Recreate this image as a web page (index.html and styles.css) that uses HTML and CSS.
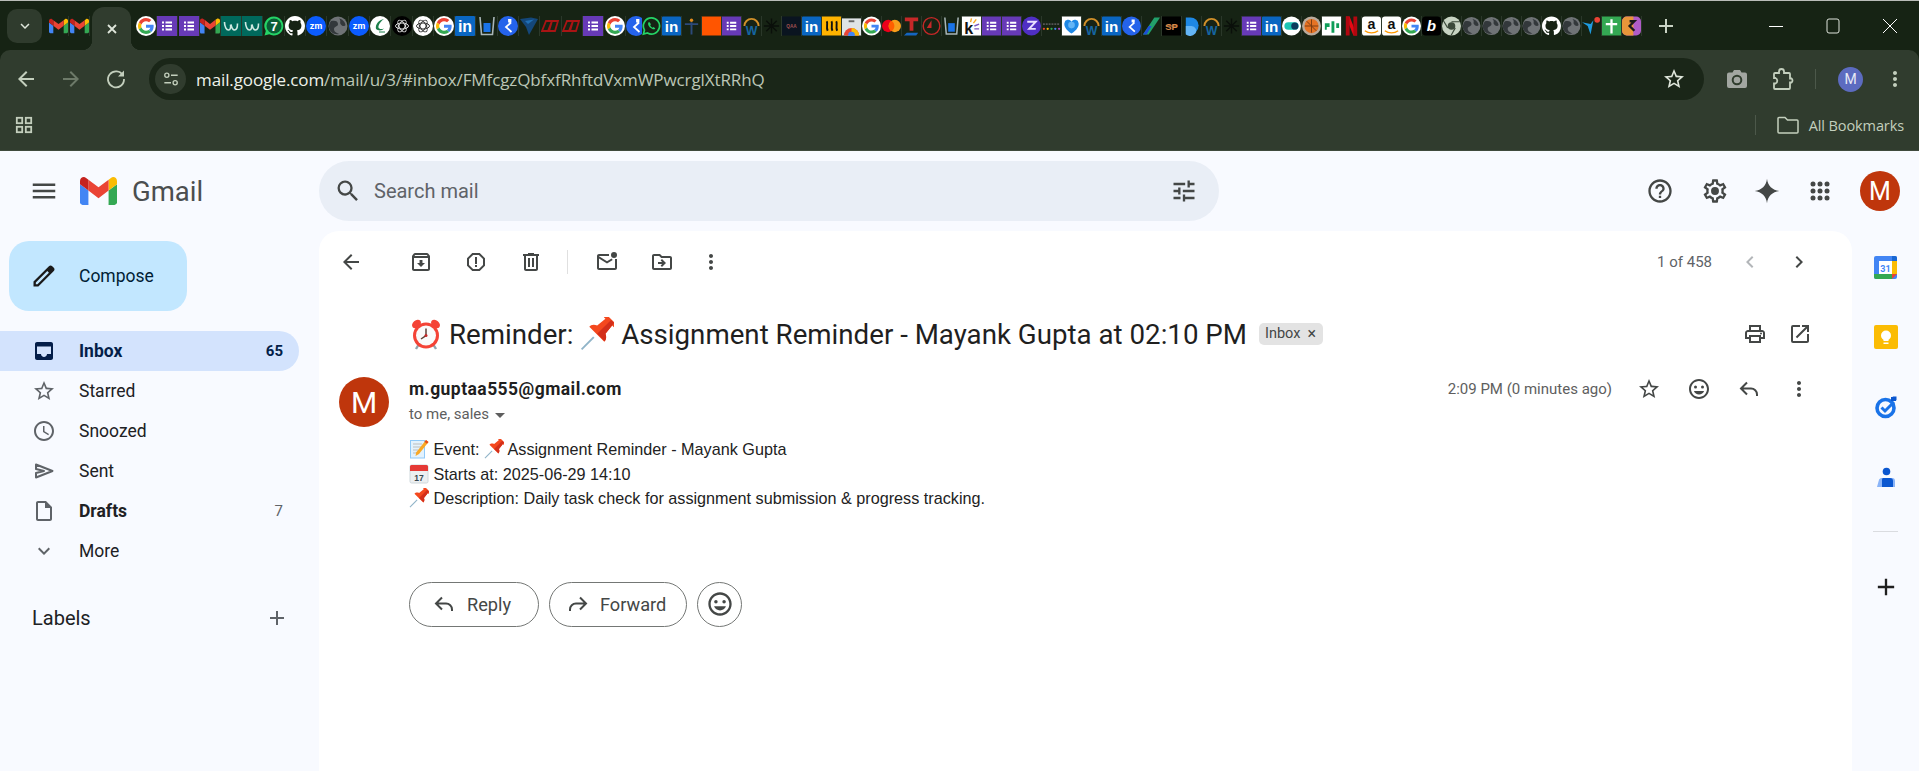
FILE: index.html
```html
<!DOCTYPE html>
<html lang="en">

<head>
  <title>Reminder - Gmail</title>
  <meta charset="utf-8" />
  <link rel="stylesheet" href="styles.css">
</head>

<body>
  <!-- icon sprites -->
  <svg class="sprites" xmlns="http://www.w3.org/2000/svg">
    <symbol id="i-menu" viewBox="0 0 24 24"><path d="M3 18h18v-2H3v2zm0-5h18v-2H3v2zm0-7v2h18V6H3z"/></symbol>
    <symbol id="i-search" viewBox="0 0 24 24"><path d="M15.5 14h-.79l-.28-.27A6.471 6.471 0 0 0 16 9.5 6.5 6.5 0 1 0 9.5 16c1.61 0 3.09-.59 4.23-1.57l.27.28v.79l5 4.99L20.49 19l-4.99-5zm-6 0C7.01 14 5 11.99 5 9.5S7.01 5 9.5 5 14 7.01 14 9.5 11.99 14 9.5 14z"/></symbol>
    <symbol id="i-tune" viewBox="0 0 24 24"><path d="M3 17v2h6v-2H3zM3 5v2h10V5H3zm10 16v-2h8v-2h-8v-2h-2v6h2zM7 9v2H3v2h4v2h2V9H7zm14 4v-2H11v2h10zm-6-4h2V7h4V5h-4V3h-2v6z"/></symbol>
    <symbol id="i-help" viewBox="0 0 24 24"><path d="M11 18h2v-2h-2v2zm1-16C6.48 2 2 6.48 2 12s4.48 10 10 10 10-4.48 10-10S17.52 2 12 2zm0 18c-4.41 0-8-3.59-8-8s3.59-8 8-8 8 3.59 8 8-3.59 8-8 8zm0-14c-2.21 0-4 1.79-4 4h2c0-1.1.9-2 2-2s2 .9 2 2c0 2-3 1.75-3 5h2c0-2.25 3-2.5 3-5 0-2.21-1.79-4-4-4z"/></symbol>
    <symbol id="i-gear" viewBox="0 0 24 24"><path d="M19.43 12.98c.04-.32.07-.64.07-.98 0-.34-.03-.66-.07-.98l2.11-1.65c.19-.15.24-.42.12-.64l-2-3.46c-.09-.16-.26-.25-.44-.25-.06 0-.12.01-.17.03l-2.49 1c-.52-.4-1.08-.73-1.69-.98l-.38-2.65C14.46 2.18 14.25 2 14 2h-4c-.25 0-.46.18-.49.42l-.38 2.65c-.61.25-1.17.59-1.69.98l-2.49-1c-.06-.02-.12-.03-.18-.03-.17 0-.34.09-.43.25l-2 3.46c-.13.22-.07.49.12.64l2.11 1.65c-.04.32-.07.65-.07.98 0 .33.03.66.07.98l-2.11 1.65c-.19.15-.24.42-.12.64l2 3.46c.09.16.26.25.44.25.06 0 .12-.01.17-.03l2.49-1c.52.4 1.08.73 1.69.98l.38 2.65c.03.24.24.42.49.42h4c.25 0 .46-.18.49-.42l.38-2.65c.61-.25 1.17-.59 1.69-.98l2.49 1c.06.02.12.03.18.03.17 0 .34-.09.43-.25l2-3.46c.12-.22.07-.49-.12-.64l-2.11-1.65zm-1.98-1.71c.04.31.05.52.05.73 0 .21-.02.43-.05.73l-.14 1.13.89.7 1.08.84-.7 1.21-1.27-.51-1.04-.42-.9.68c-.43.32-.84.56-1.25.73l-1.06.43-.16 1.13-.2 1.35h-1.4l-.19-1.35-.16-1.13-1.06-.43c-.43-.18-.83-.41-1.23-.71l-.91-.7-1.06.43-1.27.51-.7-1.21 1.08-.84.89-.7-.14-1.13c-.03-.31-.05-.54-.05-.74s.02-.43.05-.73l.14-1.13-.89-.7-1.08-.84.7-1.21 1.27.51 1.04.42.9-.68c.43-.32.84-.56 1.25-.73l1.06-.43.16-1.13.2-1.35h1.39l.19 1.35.16 1.13 1.06.43c.43.18.83.41 1.23.71l.91.7 1.06-.43 1.27-.51.7 1.21-1.07.85-.89.7.14 1.13z"/><circle cx="12" cy="12" r="3.4"/></symbol>
    <symbol id="i-gem" viewBox="0 0 24 24"><path d="M12 1.5c.6 5.8 4.7 9.9 10.5 10.5-5.8.6-9.9 4.7-10.5 10.5C11.4 16.7 7.3 12.6 1.5 12 7.300 11.400 11.400 7.300 12 1.500z"/></symbol>
    <symbol id="i-apps" viewBox="0 0 24 24"><circle cx="5" cy="5" r="2.500"/><circle cx="12" cy="5" r="2.500"/><circle cx="19" cy="5" r="2.500"/><circle cx="5" cy="12" r="2.500"/><circle cx="12" cy="12" r="2.500"/><circle cx="19" cy="12" r="2.500"/><circle cx="5" cy="19" r="2.500"/><circle cx="12" cy="19" r="2.500"/><circle cx="19" cy="19" r="2.500"/></symbol>
    <symbol id="i-pencil" viewBox="0 0 24 24"><path d="M20.41 4.94l-1.35-1.35c-.78-.78-2.05-.78-2.83 0L3 16.82V21h4.18L20.41 7.770c.79-.78.79-2.050 0-2.830zm-14 14.120L5 19v-1.360l9.820-9.820 1.410 1.410-9.820 9.830z"/></symbol>
    <symbol id="i-inbox" viewBox="0 0 24 24"><path d="M19 3H5c-1.100 0-2 .9-2 2v14c0 1.100.9 2 2 2h14c1.100 0 2-.9 2-2V5c0-1.100-.9-2-2-2zm0 12h-4c0 1.660-1.350 3-3 3s-3-1.340-3-3H5V5h14v10z"/><path d="M5 5h14v2.500H5z"/></symbol>
    <symbol id="i-star" viewBox="0 0 24 24"><path d="M22 9.240l-7.190-.62L12 2 9.190 8.630 2 9.240l5.460 4.730L5.820 21 12 17.270 18.180 21l-1.630-7.030L22 9.240zM12 15.400l-3.760 2.270 1-4.280-3.320-2.880 4.380-.38L12 6.100l1.710 4.040 4.380.38-3.320 2.880 1 4.280L12 15.400z"/></symbol>
    <symbol id="i-clock" viewBox="0 0 24 24"><path d="M11.990 2C6.470 2 2 6.480 2 12s4.470 10 9.990 10C17.520 22 22 17.520 22 12S17.520 2 11.990 2zM12 20c-4.420 0-8-3.580-8-8s3.580-8 8-8 8 3.580 8 8-3.580 8-8 8zm.5-13H11v6l5.250 3.150.75-1.230-4.500-2.670z"/></symbol>
    <symbol id="i-send" viewBox="0 0 24 24"><path d="M4 5.500 20.500 12 4 18.500V14l8-2-8-2z" fill="none" stroke="currentColor" stroke-width="2" stroke-linejoin="round"/></symbol>
    <symbol id="i-draft" viewBox="0 0 24 24"><path d="M14 2H6c-1.100 0-1.990.9-1.990 2L4 20c0 1.100.89 2 1.990 2H18c1.100 0 2-.9 2-2V8l-6-6zm4 18H6V4h7v5h5v11z"/></symbol>
    <symbol id="i-down" viewBox="0 0 24 24"><path d="M16.590 8.590L12 13.170 7.410 8.590 6 10l6 6 6-6z"/></symbol>
    <symbol id="i-add" viewBox="0 0 24 24"><path d="M19 13h-6v6h-2v-6H5v-2h6V5h2v6h6v2z"/></symbol>
    <symbol id="i-back" viewBox="0 0 24 24"><path d="M20 11H7.830l5.590-5.590L12 4l-8 8 8 8 1.410-1.410L7.830 13H20v-2z"/></symbol>
    <symbol id="i-archive" viewBox="0 0 24 24"><path d="M20.540 5.230l-1.390-1.680C18.880 3.210 18.470 3 18 3H6c-.47 0-.88.21-1.160.55L3.460 5.230C3.170 5.570 3 6.020 3 6.500V19c0 1.100.9 2 2 2h14c1.100 0 2-.9 2-2V6.500c0-.48-.17-.93-.46-1.270zM6.240 5h11.520l.81.97H5.440l.8-.97zM5 19V8h14v11H5zm8.450-9h-2.900v3H8l4 4 4-4h-2.550z"/></symbol>
    <symbol id="i-report" viewBox="0 0 24 24"><path d="M15.730 3H8.270L3 8.270v7.460L8.270 21h7.460L21 15.730V8.270L15.730 3zM19 14.900L14.900 19H9.100L5 14.900V9.100L9.100 5h5.800L19 9.100v5.800zM11 7h2v7h-2zM11 15h2v2h-2z"/></symbol>
    <symbol id="i-trash" viewBox="0 0 24 24"><path d="M15 4V3H9v1H4v2h1v13c0 1.100.9 2 2 2h10c1.100 0 2-.9 2-2V6h1V4h-5zm2 15H7V6h10v13zM9 8h2v9H9zm4 0h2v9h-2z"/></symbol>
    <symbol id="i-unread" viewBox="0 0 24 24"><path d="M22 9v9c0 1.100-.9 2-2 2H4c-1.100 0-2-.9-2-2V6c0-1.100.9-2 2-2h10v2H4v12h16V9h2zM4 6.300l8 5 4.600-2.900 1.100 1.700L12 13.600 4 8.600z"/><circle cx="19" cy="5" r="3"/></symbol>
    <symbol id="i-move" viewBox="0 0 24 24"><path d="M20 6h-8l-2-2H4c-1.100 0-1.990.9-1.990 2L2 18c0 1.100.9 2 2 2h16c1.100 0 2-.9 2-2V8c0-1.100-.9-2-2-2zm0 12H4V6h5.170l2 2H20v10zm-8.010-9l-1.410 1.410L12.160 12H8v2h4.160l-1.590 1.590L11.990 17 16 13.010 11.990 9z"/></symbol>
    <symbol id="i-more" viewBox="0 0 24 24"><path d="M12 8c1.100 0 2-.9 2-2s-.9-2-2-2-2 .9-2 2 .9 2 2 2zm0 2c-1.100 0-2 .9-2 2s.9 2 2 2 2-.9 2-2-.9-2-2-2zm0 6c-1.100 0-2 .9-2 2s.9 2 2 2 2-.9 2-2-.9-2-2-2z"/></symbol>
    <symbol id="i-prev" viewBox="0 0 24 24"><path d="M15.410 7.410L14 6l-6 6 6 6 1.410-1.410L10.830 12z"/></symbol>
    <symbol id="i-next" viewBox="0 0 24 24"><path d="M10 6L8.590 7.410 13.170 12l-4.580 4.590L10 18l6-6z"/></symbol>
    <symbol id="i-print" viewBox="0 0 24 24"><path d="M19 8h-1V3H6v5H5c-1.660 0-3 1.340-3 3v6h4v4h12v-4h4v-6c0-1.660-1.340-3-3-3zM8 5h8v3H8V5zm8 12v2H8v-4h8v2zm2-2v-2H6v2H4v-4c0-.55.45-1 1-1h14c.55 0 1 .45 1 1v4h-2z"/><circle cx="18" cy="11.500" r="1"/></symbol>
    <symbol id="i-open" viewBox="0 0 24 24"><path d="M19 19H5V5h7V3H5a2 2 0 0 0-2 2v14a2 2 0 0 0 2 2h14c1.100 0 2-.9 2-2v-7h-2v7zM14 3v2h3.590l-9.830 9.830 1.410 1.410L19 6.410V10h2V3h-7z"/></symbol>
    <symbol id="i-smile" viewBox="0 0 24 24"><path d="M12 2C6.480 2 2 6.480 2 12s4.480 10 10 10 10-4.480 10-10S17.520 2 12 2zm0 18c-4.410 0-8-3.590-8-8s3.590-8 8-8 8 3.590 8 8-3.590 8-8 8z"/><circle cx="8.500" cy="10" r="1.500"/><circle cx="15.500" cy="10" r="1.500"/><path d="M12 17.500c2.330 0 4.310-1.460 5.110-3.500H6.890c.8 2.040 2.780 3.500 5.110 3.500z"/></symbol>
    <symbol id="i-reply" viewBox="0 0 24 24"><path d="M10 5.500 4 11.500l6 6M4 11.500h10a6 6 0 0 1 6 6v1.500" fill="none" stroke="currentColor" stroke-width="2"/></symbol>
    <symbol id="i-forward" viewBox="0 0 24 24"><path d="M14 5.500l6 6-6 6M20 11.500H10a6 6 0 0 0-6 6v1.500" fill="none" stroke="currentColor" stroke-width="2"/></symbol>

    <!-- browser toolbar -->
    <symbol id="b-reload" viewBox="0 0 24 24"><path d="M19 8.500A8 8 0 1 0 20 12" fill="none" stroke="currentColor" stroke-width="1.800"/><path d="M20 3.500v6h-6z"/></symbol>
    <symbol id="b-chip" viewBox="0 0 24 24"><g fill="none" stroke="currentColor" stroke-width="1.600"><circle cx="7" cy="7.500" r="2.500"/><path d="M12 7.500h8M4 16.500h8"/><circle cx="17" cy="16.500" r="2.500"/></g></symbol>
    <symbol id="b-camera" viewBox="0 0 24 24"><path d="M9 3h6l1.500 2.500H20a2 2 0 0 1 2 2V19a2 2 0 0 1-2 2H4a2 2 0 0 1-2-2V7.500a2 2 0 0 1 2-2h3.500z" fill="#a2a6a1"/><circle cx="12" cy="13" r="4.300" fill="none" stroke="#2f3c2d" stroke-width="2"/></symbol>
    <symbol id="b-ext" viewBox="0 0 24 24"><path d="M9 4.500a2.500 2.500 0 0 1 5 0V6h5a1 1 0 0 1 1 1v4.500h1.500a2.500 2.500 0 0 1 0 4H20V21a1 1 0 0 1-1 1H5a1 1 0 0 1-1-1v-4.500h1.500a3 3 0 0 0 0-5.500H4V7a1 1 0 0 1 1-1h4z" fill="none" stroke="currentColor" stroke-width="1.800"/></symbol>
    <symbol id="b-grid" viewBox="0 0 20 20"><g fill="none" stroke="currentColor" stroke-width="2"><rect x="2" y="2" width="6" height="6"/><rect x="12" y="2" width="6" height="6"/><rect x="2" y="12" width="6" height="6"/><rect x="12" y="12" width="6" height="6"/></g></symbol>
    <symbol id="b-folder" viewBox="0 0 24 24"><path d="M2 5.500a1 1 0 0 1 1-1h6l2.500 2.500H21a1 1 0 0 1 1 1v11a1 1 0 0 1-1 1H3a1 1 0 0 1-1-1z" fill="none" stroke="currentColor" stroke-width="1.500"/></symbol>

    <!-- gmail + side panel logos -->
    <symbol id="l-gmail" viewBox="52 42 88 66"><path fill="#4285f4" d="M58 108h14V74L52 59v43c0 3.320 2.690 6 6 6"/><path fill="#34a853" d="M120 108h14c3.320 0 6-2.690 6-6V59l-20 15"/><path fill="#fbbc04" d="M120 48v26l20-15v-8c0-7.420-8.470-11.650-14.400-7.200"/><path fill="#ea4335" d="M72 74V48l24 18 24-18v26L96 92"/><path fill="#c5221f" d="M52 51v8l20 15V48l-5.600-4.200c-5.940-4.450-14.400-.22-14.400 7.200"/></symbol>
    <symbol id="l-cal" viewBox="0 0 23 23"><rect width="23" height="23" rx="2" fill="#4285f4"/><rect x="5" y="5" width="13" height="13" fill="#fff"/><path d="M18 5h5v13h-5z" fill="#fbbc04"/><path d="M0 18h18v5H2a2 2 0 0 1-2-2z" fill="#34a853"/><path d="M18 0h3a2 2 0 0 1 2 2v3h-5z" fill="#1967d2"/><path d="M18 18h5l-5 5z" fill="#ea4335"/><text x="11.500" y="15.500" text-anchor="middle" class="cal-num">31</text></symbol>
    <symbol id="l-keep" viewBox="0 0 24 24"><rect width="24" height="24" rx="2" fill="#fbbc04"/><circle cx="12" cy="10.500" r="5" fill="#fff"/><path d="M9.500 14h5v2h-5zM9.500 17.500h5V19h-5z" fill="#fff"/></symbol>
    <symbol id="l-tasks" viewBox="0 0 24 24"><circle cx="11.500" cy="13" r="8.500" fill="none" stroke="#1a73e8" stroke-width="3.600"/><path d="M7.500 12.500l3.500 3.500 9-9" fill="none" stroke="#1a73e8" stroke-width="3"/><path d="M18.500 1.500h4v4z" fill="#0b57d0"/><rect x="17" y="2" width="5" height="4" fill="#0b57d0"/></symbol>
    <symbol id="l-contacts" viewBox="0 0 24 24"><circle cx="12.500" cy="6.500" r="3.800" fill="#0b57d0"/><path d="M7 13h11a3 3 0 0 1 3 3v6H3l1.500-5.500A4 4 0 0 1 7 13z" fill="#8ab4f8"/><path d="M9 13h7a3 3 0 0 1 3 3v6H8v-7a2 2 0 0 1 1-2z" fill="#0b57d0"/></symbol>

    <!-- emoji -->
    <symbol id="e-alarm" viewBox="0 0 32 32"><ellipse cx="6.500" cy="6" rx="5" ry="3.600" fill="#f44336" transform="rotate(-40 6.500 6)"/><ellipse cx="25.500" cy="6" rx="5" ry="3.600" fill="#f44336" transform="rotate(40 25.500 6)"/><path d="M6 31l3-5M26 31l-3-5" stroke="#90a4ae" stroke-width="2.400"/><circle cx="16" cy="17.500" r="13" fill="#f44336"/><circle cx="16" cy="17.500" r="10" fill="#fafafa"/><path d="M16 10.500v7l-5 3.500" fill="none" stroke="#5d4037" stroke-width="1.500"/><circle cx="16" cy="17.500" r="1.500" fill="#c62828"/></symbol>
    <symbol id="e-pin" viewBox="0 0 32 32"><path d="M1.500 30.500 13 19" stroke="#90b4c8" stroke-width="1.800"/><g transform="rotate(45 19 13)"><path d="M13 -2h12a1.500 1.500 0 0 1 0 3.500h-1.500l1 10c3.500 1.500 4.500 4 4.500 6H9c0-2 1-4.500 4.500-6l1-10H13a1.500 1.500 0 0 1 0-3.500z" fill="#f4481e"/><path d="M19 -1.500h4l1.500 13c2.500 1 4 3 4.500 5.500H19z" fill="#d32f1a"/></g></symbol>
    <symbol id="e-memo" viewBox="0 0 20 20"><rect x="1.500" y="1.500" width="14" height="17.500" fill="#e3f2fd" stroke="#90caf9"/><path d="M4 5h9M4 8h8M4 11h5M4 14h4" stroke="#bdbdbd"/><path d="M17 1l2.500 2L10 15l-3.500 2 .8-3.800z" fill="#f9a825"/><path d="M17 1l2.500 2-1.500 1.800-2.500-2z" fill="#e64a19"/></symbol>
    <symbol id="e-cal" viewBox="0 0 20 20"><rect x="1" y="1" width="18" height="18" rx="1.500" fill="#eceff1" stroke="#cfd8dc"/><path d="M1 2.500A1.500 1.500 0 0 1 2.500 1h15A1.500 1.500 0 0 1 19 2.500V7H1z" fill="#e53935"/><text x="10" y="17" text-anchor="middle" class="cal-17">17</text></symbol>

    <!-- tab favicons -->
    <symbol id="f-g" viewBox="-6 -6 60 60"><circle cx="24" cy="24" r="30" fill="#fff"/><path fill="#EA4335" d="M24 9.500c3.540 0 6.710 1.220 9.210 3.600l6.850-6.850C35.900 2.380 30.470 0 24 0 14.620 0 6.510 5.380 2.560 13.220l7.980 6.190C12.430 13.720 17.740 9.500 24 9.500z"/><path fill="#4285F4" d="M46.980 24.550c0-1.570-.15-3.090-.38-4.550H24v9.020h12.940c-.58 2.960-2.260 5.480-4.780 7.180l7.730 6c4.510-4.180 7.090-10.360 7.090-17.650z"/><path fill="#FBBC05" d="M10.530 28.590c-.48-1.450-.76-2.990-.76-4.590s.27-3.140.76-4.590l-7.980-6.190C.92 16.460 0 20.120 0 24c0 3.880.92 7.540 2.560 10.780l7.970-6.190z"/><path fill="#34A853" d="M24 48c6.480 0 11.930-2.130 15.890-5.810l-7.730-6c-2.150 1.450-4.920 2.300-8.160 2.300-6.260 0-11.570-4.220-13.470-9.910l-7.980 6.190C6.510 42.620 14.620 48 24 48z"/></symbol>
    <symbol id="f-forms" viewBox="0 0 20 20"><rect width="20" height="20" fill="#673ab7"/><path d="M5 5.500h2v2H5zM5 9h2v2H5zM5 12.500h2v2H5zM8.500 5.500H15v2H8.500zM8.500 9H15v2H8.500zM8.500 12.500H15v2H8.500z" fill="#fff"/></symbol>
    <symbol id="f-wave" viewBox="0 0 20 20"><rect width="20" height="20" fill="#00695c"/><path d="M3.500 6c0 5 2 8 4 8s2.500-3 2-5.500M10 8.500c.6 3 2 5.500 3.500 5.500 2.500 0 3-3 3-6.500" fill="none" stroke="#cfe9e2" stroke-width="1.600"/></symbol>
    <symbol id="f-wa7" viewBox="0 0 20 20"><path d="M10 .5A9.500 9.500 0 0 0 1.800 15L.5 19.500l4.700-1.200A9.500 9.500 0 1 0 10 .5z" fill="#25d366"/><circle cx="10" cy="10" r="7.500" fill="#0b5d35"/><text x="10" y="14.500" text-anchor="middle" class="ft-7">7</text></symbol>
    <symbol id="f-gh" viewBox="0 0 16 16"><path fill="#fff" d="M8 0C3.580 0 0 3.580 0 8c0 3.540 2.290 6.530 5.470 7.590.4.070.55-.17.55-.38 0-.19-.01-.82-.01-1.490-2.010.37-2.530-.49-2.690-.94-.09-.23-.48-.94-.82-1.130-.28-.15-.68-.52-.01-.53.63-.01 1.080.58 1.230.82.72 1.210 1.870.87 2.330.66.070-.52.28-.87.51-1.070-1.780-.2-3.640-.89-3.640-3.950 0-.87.31-1.590.82-2.150-.08-.2-.36-1.020.08-2.120 0 0 .67-.21 2.200.82.64-.18 1.320-.27 2-.27.68 0 1.360.09 2 .27 1.530-1.040 2.200-.82 2.200-.82.44 1.100.16 1.920.08 2.120.51.56.82 1.270.82 2.150 0 3.070-1.870 3.750-3.650 3.950.29.25.54.73.54 1.480 0 1.070-.01 1.930-.01 2.200 0 .21.15.46.55.38A8.013 8.013 0 0016 8c0-4.420-3.580-8-8-8z"/></symbol>
    <symbol id="f-zm" viewBox="0 0 20 20"><circle cx="10" cy="10" r="10" fill="#0b5cff"/><text x="10" y="13" text-anchor="middle" class="ft-zm">zm</text></symbol>
    <symbol id="f-globe" viewBox="0 0 20 20"><circle cx="10" cy="10" r="9.500" fill="#6f7376"/><path d="M3 5c4-1 7 0 7 3s-4 2-4 5 3 4 5 5c-5 1-9-2-10-6-.4-2.500.6-5 2-7zM11 2.500c3 .5 6 3 6.500 6.500-1 2-4 1-5-1s1-3-1.500-5.500z" fill="#33383b"/></symbol>
    <symbol id="f-leaf" viewBox="0 0 20 20"><circle cx="10" cy="10" r="10" fill="#fff"/><path d="M14 3C9 4 5 8 6 13c2 2 6 2 8-.5-3 1-5 .5-5.500-1C8 9 11 5 14 3z" fill="#1b7f4b"/><path d="M9 16h6" stroke="#1b7f4b"/></symbol>
    <symbol id="f-gpt" viewBox="0 0 20 20"><circle cx="10" cy="10" r="10" fill="#000"/><g fill="none" stroke="#ddd" stroke-width="1"><ellipse cx="10" cy="10" rx="6.500" ry="3"/><ellipse cx="10" cy="10" rx="6.500" ry="3" transform="rotate(60 10 10)"/><ellipse cx="10" cy="10" rx="6.500" ry="3" transform="rotate(120 10 10)"/></g></symbol>
    <symbol id="f-gptw" viewBox="0 0 20 20"><circle cx="10" cy="10" r="10" fill="#fff"/><g fill="none" stroke="#333" stroke-width="1"><ellipse cx="10" cy="10" rx="6.500" ry="3"/><ellipse cx="10" cy="10" rx="6.500" ry="3" transform="rotate(60 10 10)"/><ellipse cx="10" cy="10" rx="6.500" ry="3" transform="rotate(120 10 10)"/></g></symbol>
    <symbol id="f-in" viewBox="0 0 20 20"><rect width="20" height="20" rx="1" fill="#0a66c2"/><text x="10" y="16" text-anchor="middle" class="ft-in">in</text></symbol>
    <symbol id="f-cup" viewBox="0 0 20 20"><path d="M3 1l1.500 17.500h11L17 1" fill="none" stroke="#a9b6b8" stroke-width="1.600"/><rect x="6.500" y="7" width="7" height="9" fill="#1a73e8"/></symbol>
    <symbol id="f-kb" viewBox="0 0 20 20"><circle cx="10" cy="10" r="10" fill="#2563eb"/><path d="M11 4h1.500v1.500H11zM13 6.500 8 11l5.500 5" fill="none" stroke="#fff" stroke-width="1.800"/></symbol>
    <symbol id="f-swoosh" viewBox="0 0 20 20"><path d="M1 3l11-1.500 7 1.500-9 16-3-8z" fill="#14477a"/><path d="M6 5l9-1.500L9 8z" fill="#1f6fb5"/></symbol>
    <symbol id="f-red" viewBox="0 0 20 20"><path d="M1 15 5 5h6l-3 10zM7 15 11 5h6l-3 10z" fill="none" stroke="#a81414" stroke-width="1.800"/></symbol>
    <symbol id="f-fig" viewBox="0 0 20 20"><circle cx="10" cy="4" r="1.800" fill="#e08a1e"/><path d="M3 8h14M10 6v13" stroke="#2c4a7a" stroke-width="2"/></symbol>
    <symbol id="f-wa" viewBox="0 0 20 20"><path d="M10 1.500A8.500 8.500 0 0 0 2.600 14.300L1.500 18.500l4.300-1.100A8.500 8.500 0 1 0 10 1.500z" fill="none" stroke="#25d366" stroke-width="1.800"/><path d="M7 6c-1.500 1.500 0 4.500 1.800 5.800s4 2.500 5.200.7l-1.800-1.500-1.100.8c-1-.5-2-1.500-2.500-2.600l.8-1L8 6z" fill="#25d366"/></symbol>
    <symbol id="f-orange" viewBox="0 0 20 20"><rect width="20" height="20" fill="#ff5500"/></symbol>
    <symbol id="f-w" viewBox="0 0 20 20"><path d="M2.500 10a7.500 7.500 0 0 1 15 0" fill="none" stroke="#d2902a" stroke-width="2"/><text x="10" y="19.500" text-anchor="middle" class="ft-w">W</text></symbol>
    <symbol id="f-star" viewBox="0 0 20 20"><path d="M10 2v16M2 10h16M4.500 4.500l11 11M15.500 4.500l-11 11" stroke="#0a0f0a" stroke-width="1.500"/></symbol>
    <symbol id="f-qaa" viewBox="0 0 20 20"><rect width="20" height="20" fill="#0a1420"/><text x="10" y="12" text-anchor="middle" class="ft-q">QAA</text></symbol>
    <symbol id="f-rrr" viewBox="0 0 20 20"><rect width="20" height="20" fill="#ffb300"/><path d="M5 5c1.500 3-1 6 1 10M10 5c1.500 3-1 6 1 10M15 5c1.500 3-1 6 1 10" fill="none" stroke="#111" stroke-width="2"/></symbol>
    <symbol id="f-store" viewBox="0 0 20 20"><rect y="2" width="20" height="18" fill="#dfe3e6"/><rect x="7" y="4" width="6" height="2" fill="#666"/><path d="M2 20a8 8 0 0 1 16 0z" fill="#ea4335"/><path d="M10 12a8 8 0 0 1 8 8h-5a3 3 0 0 0-3-3z" fill="#fbbc04"/><circle cx="10" cy="19.500" r="3.500" fill="#4285f4"/></symbol>
    <symbol id="f-mc" viewBox="0 0 20 20"><circle cx="6.500" cy="10" r="6.500" fill="#eb001b"/><circle cx="13.500" cy="10" r="6.500" fill="#f79e1b"/><path d="M10 4.500a6.500 6.500 0 0 1 0 11 6.500 6.500 0 0 1 0-11z" fill="#ff5f00"/></symbol>
    <symbol id="f-t" viewBox="0 0 20 20"><path d="M3 1h14v4h-5v10H8V5H3z" fill="#c62828"/><path d="M2 20l3-3h12l-2 3z" fill="#1565c0"/></symbol>
    <symbol id="f-timer" viewBox="0 0 20 20"><circle cx="10" cy="10" r="8.800" fill="none" stroke="#c62828" stroke-width="1.500"/><path d="M10 4v8H5z" fill="#c62828"/></symbol>
    <symbol id="f-kw" viewBox="0 0 20 20"><rect width="20" height="20" fill="#fff"/><text x="7" y="18" text-anchor="middle" class="ft-k">k</text><path d="M9 6l1-4M12 7l3-4" stroke="#f9a825" stroke-width="1.500"/><path d="M13 10l5-2M13 13l5 0" stroke="#7e57c2" stroke-width="1.500"/></symbol>
    <symbol id="f-z" viewBox="0 0 20 20"><circle cx="10" cy="10" r="10" fill="#4f2fc4"/><path d="M5.500 5.500h9L7.500 13H14.500" fill="none" stroke="#e8e0ff" stroke-width="2"/></symbol>
    <symbol id="f-dots" viewBox="0 0 20 20"><path d="M1 8h18" stroke="#555" stroke-width="2" stroke-dasharray="2 1"/><circle cx="2" cy="13" r="1.200" fill="#ea4335"/><circle cx="6" cy="13" r="1.200" fill="#fbbc04"/><circle cx="10" cy="13" r="1.200" fill="#34a853"/><circle cx="14" cy="13" r="1.200" fill="#4285f4"/><circle cx="18" cy="13" r="1.200" fill="#ab47bc"/></symbol>
    <symbol id="f-heart" viewBox="0 0 20 20"><rect width="20" height="20" fill="#fff"/><path d="M10 18C4 14 2 10 2.500 7A4 4 0 0 1 10 5.500 4 4 0 0 1 17.500 7c.5 3-1.500 7-7.500 11z" fill="#1e88e5"/><circle cx="10" cy="9" r="3.500" fill="#64b5f6"/></symbol>
    <symbol id="f-slash" viewBox="0 0 20 20"><path d="M13 1h6L7 19H1z" fill="#22a06b"/><path d="M7 10l3 0-5 9H1z" fill="#1d4ed8"/></symbol>
    <symbol id="f-sp" viewBox="0 0 20 20"><rect width="20" height="20" fill="#000"/><text x="10" y="14" text-anchor="middle" class="ft-sp">SP</text><path d="M4 10h12" stroke="#d88a4a"/></symbol>
    <symbol id="f-p" viewBox="0 0 20 20"><path d="M4 1h5a8.500 8.500 0 0 1 0 17H4z" fill="#1e88e5"/><path d="M4 10h6a5 5 0 0 1 4 8 8 8 0 0 1-10 1z" fill="#64b5f6"/></symbol>
    <symbol id="f-toggle" viewBox="0 0 20 20"><circle cx="10" cy="10" r="10" fill="#fff"/><rect x="2.500" y="6" width="15" height="8" rx="4" fill="#1cc5b5"/><circle cx="13.500" cy="10" r="3.800" fill="#0b3c5d"/></symbol>
    <symbol id="f-lpu" viewBox="0 0 20 20"><circle cx="10" cy="10" r="10" fill="#b9aa9c"/><circle cx="10" cy="10" r="7.500" fill="#e67324"/><path d="M3 10h14M10 3v14M5 5l10 10" stroke="#7a3b12"/></symbol>
    <symbol id="f-gi" viewBox="0 0 20 20"><rect width="20" height="20" fill="#fff"/><path d="M3 7h5v4H5v3l-2 0zM10 5h3v12h-3zM15 7h3v5h-3z" fill="#0f9d58"/></symbol>
    <symbol id="f-n" viewBox="0 0 20 20"><path d="M4 0h4l8 20h-4z" fill="#e50914"/><path d="M4 0h4v20H4zM12 0h4v20h-4z" fill="#b20710"/></symbol>
    <symbol id="f-amz" viewBox="0 0 20 20"><rect width="20" height="20" rx="3" fill="#fff"/><text x="10" y="13" text-anchor="middle" class="ft-a">a</text><path d="M3 15c4 3 10 3 14 0" fill="none" stroke="#ff9900" stroke-width="1.500"/></symbol>
    <symbol id="f-b" viewBox="0 0 20 20"><rect width="20" height="20" rx="4" fill="#000"/><text x="10" y="15" text-anchor="middle" class="ft-b">b</text></symbol>
    <symbol id="f-chrome" viewBox="0 0 20 20"><circle cx="10" cy="10" r="10" fill="#c7d3c2"/><circle cx="10" cy="10" r="4" fill="#3c4a3a"/><path d="M10 5.500h9M6 12 1.500 4.500M14 12l-4.500 8" stroke="#3c4a3a" stroke-width="1.200"/></symbol>
    <symbol id="f-bird" viewBox="0 0 20 20"><path d="M0 6l9 2 3-4-3 15-3-9z" fill="#1e9be0"/><circle cx="16" cy="3.500" r="3" fill="#ea4335"/></symbol>
    <symbol id="f-plus" viewBox="0 0 20 20"><rect width="20" height="20" fill="#34a853"/><path d="M10 3v15M4 8h12" stroke="#fff" stroke-width="2.400"/></symbol>
    <symbol id="f-last" viewBox="0 0 20 20"><rect width="20" height="20" rx="5" fill="#b05cc8"/><path d="M0 5a5 5 0 0 1 5-5h7v20H5a5 5 0 0 1-5-5z" fill="#e8963a"/><path d="M8 5l5 0-5 5 5 5" fill="none" stroke="#1a1a1a" stroke-width="2.500"/></symbol>
  </svg>

  <header class="chrome">
    <div class="tabstrip">
      <span class="tab-search"><svg class="ic-18"><use href="#i-down"/></svg></span>
      <div class="pinned">
        <span class="fav"><svg><use href="#l-gmail"/></svg></span>
        <span class="fav"><svg><use href="#l-gmail"/></svg></span>
      </div>
      <span class="tab-active"><svg class="ic-18"><path d="M5 5 13 13M13 5 5 13" stroke="currentColor" stroke-width="1.800"/></svg></span>
      <div class="favs favs-wide">
        <span class="fav"><svg><use href="#f-g"/></svg></span>
        <span class="fav"><svg><use href="#f-forms"/></svg></span>
        <span class="fav"><svg><use href="#f-forms"/></svg></span>
        <span class="fav"><svg><use href="#l-gmail"/></svg></span>
        <span class="fav"><svg><use href="#f-wave"/></svg></span>
        <span class="fav"><svg><use href="#f-wave"/></svg></span>
        <span class="fav"><svg><use href="#f-wa7"/></svg></span>
        <span class="fav"><svg><use href="#f-gh"/></svg></span>
        <span class="fav"><svg><use href="#f-zm"/></svg></span>
        <span class="fav"><svg><use href="#f-globe"/></svg></span>
        <span class="fav"><svg><use href="#f-zm"/></svg></span>
        <span class="fav"><svg><use href="#f-leaf"/></svg></span>
        <span class="fav"><svg><use href="#f-gpt"/></svg></span>
        <span class="fav"><svg><use href="#f-gptw"/></svg></span>
        <span class="fav"><svg><use href="#f-g"/></svg></span>
        <span class="fav"><svg><use href="#f-in"/></svg></span>
        <span class="fav"><svg><use href="#f-cup"/></svg></span>
        <span class="fav"><svg><use href="#f-kb"/></svg></span>
        <span class="fav"><svg><use href="#f-swoosh"/></svg></span>
        <span class="fav"><svg><use href="#f-red"/></svg></span>
        <span class="fav"><svg><use href="#f-red"/></svg></span>
        <span class="fav"><svg><use href="#f-forms"/></svg></span>
        <span class="fav"><svg><use href="#f-g"/></svg></span>
        <span class="fav fav-cut"><svg><use href="#f-kb"/></svg></span>
      </div>
      <div class="favs">
        <span class="fav"><svg><use href="#f-wa"/></svg></span>
        <span class="fav"><svg><use href="#f-in"/></svg></span>
        <span class="fav"><svg><use href="#f-fig"/></svg></span>
        <span class="fav"><svg><use href="#f-orange"/></svg></span>
        <span class="fav"><svg><use href="#f-forms"/></svg></span>
        <span class="fav"><svg><use href="#f-w"/></svg></span>
        <span class="fav"><svg><use href="#f-star"/></svg></span>
        <span class="fav"><svg><use href="#f-qaa"/></svg></span>
        <span class="fav"><svg><use href="#f-in"/></svg></span>
        <span class="fav"><svg><use href="#f-rrr"/></svg></span>
        <span class="fav"><svg><use href="#f-store"/></svg></span>
        <span class="fav"><svg><use href="#f-g"/></svg></span>
        <span class="fav"><svg><use href="#f-mc"/></svg></span>
        <span class="fav"><svg><use href="#f-t"/></svg></span>
        <span class="fav"><svg><use href="#f-timer"/></svg></span>
        <span class="fav"><svg><use href="#f-cup"/></svg></span>
        <span class="fav"><svg><use href="#f-kw"/></svg></span>
        <span class="fav"><svg><use href="#f-forms"/></svg></span>
        <span class="fav"><svg><use href="#f-forms"/></svg></span>
        <span class="fav"><svg><use href="#f-z"/></svg></span>
        <span class="fav"><svg><use href="#f-dots"/></svg></span>
        <span class="fav"><svg><use href="#f-heart"/></svg></span>
        <span class="fav"><svg><use href="#f-w"/></svg></span>
        <span class="fav"><svg><use href="#f-in"/></svg></span>
        <span class="fav"><svg><use href="#f-kb"/></svg></span>
        <span class="fav"><svg><use href="#f-slash"/></svg></span>
        <span class="fav"><svg><use href="#f-sp"/></svg></span>
        <span class="fav"><svg><use href="#f-p"/></svg></span>
        <span class="fav"><svg><use href="#f-w"/></svg></span>
        <span class="fav"><svg><use href="#f-star"/></svg></span>
        <span class="fav"><svg><use href="#f-forms"/></svg></span>
        <span class="fav"><svg><use href="#f-in"/></svg></span>
        <span class="fav"><svg><use href="#f-toggle"/></svg></span>
        <span class="fav"><svg><use href="#f-lpu"/></svg></span>
        <span class="fav"><svg><use href="#f-gi"/></svg></span>
        <span class="fav"><svg><use href="#f-n"/></svg></span>
        <span class="fav"><svg><use href="#f-amz"/></svg></span>
        <span class="fav"><svg><use href="#f-amz"/></svg></span>
        <span class="fav"><svg><use href="#f-g"/></svg></span>
        <span class="fav"><svg><use href="#f-b"/></svg></span>
        <span class="fav"><svg><use href="#f-chrome"/></svg></span>
        <span class="fav"><svg><use href="#f-globe"/></svg></span>
        <span class="fav"><svg><use href="#f-globe"/></svg></span>
        <span class="fav"><svg><use href="#f-globe"/></svg></span>
        <span class="fav"><svg><use href="#f-globe"/></svg></span>
        <span class="fav"><svg><use href="#f-gh"/></svg></span>
        <span class="fav"><svg><use href="#f-globe"/></svg></span>
        <span class="fav"><svg><use href="#f-bird"/></svg></span>
        <span class="fav"><svg><use href="#f-plus"/></svg></span>
        <span class="fav"><svg><use href="#f-last"/></svg></span>
      </div>
      <span class="new-tab"><svg class="ic-24"><use href="#i-add"/></svg></span>
      <div class="win-btns">
        <span class="win-btn"><svg width="14" height="14"><path d="M0 7.500h14" stroke="#fff"/></svg></span>
        <span class="win-btn"><svg width="14" height="16"><rect x="1" y="1" width="12" height="14" rx="2" fill="none" stroke="#dfe5dc" stroke-width="1"/></svg></span>
        <span class="win-btn"><svg width="16" height="16"><path d="M1 1l14 14M15 1 1 15" stroke="#fff" stroke-width="1"/></svg></span>
      </div>
    </div>

    <div class="toolbar">
      <span class="tb-btn"><svg class="ic-24"><use href="#i-back"/></svg></span>
      <span class="tb-btn tb-off"><svg class="ic-24"><use href="#i-back" transform="matrix(-1 0 0 1 24 0)"/></svg></span>
      <span class="tb-btn"><svg class="ic-24"><use href="#b-reload"/></svg></span>
      <div class="omnibox">
        <span class="chip"><svg class="ic-20"><use href="#b-chip"/></svg></span>
        <span class="url"><b>mail.google.com</b>/mail/u/3/#inbox/FMfcgzQbfxfRhftdVxmWPwcrglXtRRhQ</span>
        <svg class="ic-24 omni-star"><use href="#i-star"/></svg>
      </div>
      <span class="tb-btn tb-cam"><svg class="ic-24"><use href="#b-camera"/></svg></span>
      <span class="tb-btn tb-ext"><svg class="ic-24"><use href="#b-ext"/></svg></span>
      <span class="tb-sep"></span>
      <span class="tb-avatar">M</span>
      <span class="tb-btn tb-dots"><svg class="ic-24"><use href="#i-more"/></svg></span>
    </div>

    <div class="bookmarks">
      <svg class="ic-18"><use href="#b-grid"/></svg>
      <span class="bm-sep"></span>
      <svg class="ic-24 bm-folder"><use href="#b-folder"/></svg>
      <span class="bm-text">All Bookmarks</span>
    </div>
  </header>

  <div class="gmail">
    <div class="gm-head">
      <div class="brand">
        <svg class="ic-30"><use href="#i-menu"/></svg>
        <svg class="logo"><use href="#l-gmail"/></svg>
        <span class="logo-text">Gmail</span>
      </div>
      <div class="search">
        <svg class="ic-28"><use href="#i-search"/></svg>
        <span class="search-text">Search mail</span>
        <svg class="ic-28 search-tune"><use href="#i-tune"/></svg>
      </div>
      <div class="head-right">
        <span class="icon-btn head-help"><svg class="ic-28"><use href="#i-help"/></svg></span>
        <span class="icon-btn head-gear"><svg class="ic-28"><use href="#i-gear"/></svg></span>
        <span class="icon-btn"><svg class="ic-28"><use href="#i-gem"/></svg></span>
        <span class="icon-btn"><svg class="ic-24"><use href="#i-apps"/></svg></span>
        <span class="avatar avatar-head">M</span>
      </div>
    </div>

    <div class="gm-body">
      <aside class="sidebar">
        <div class="compose">
          <svg class="ic-28"><use href="#i-pencil"/></svg>
          <span>Compose</span>
        </div>
        <nav class="nav">
          <div class="nav-row nav-active"><svg class="ic-24"><use href="#i-inbox"/></svg><span>Inbox</span><em>65</em></div>
          <div class="nav-row"><svg class="ic-24"><use href="#i-star"/></svg><span>Starred</span></div>
          <div class="nav-row"><svg class="ic-24"><use href="#i-clock"/></svg><span>Snoozed</span></div>
          <div class="nav-row"><svg class="ic-24"><use href="#i-send"/></svg><span>Sent</span></div>
          <div class="nav-row nav-bold"><svg class="ic-24"><use href="#i-draft"/></svg><span>Drafts</span><em>7</em></div>
          <div class="nav-row"><svg class="ic-24"><use href="#i-down"/></svg><span>More</span></div>
        </nav>
        <div class="labels">
          <span>Labels</span>
          <svg class="ic-24"><use href="#i-add"/></svg>
        </div>
      </aside>

      <main class="card">
        <div class="mail-tools">
          <span class="icon-btn"><svg class="ic-24"><use href="#i-back"/></svg></span>
          <div class="tool-group">
            <span class="icon-btn"><svg class="ic-24"><use href="#i-archive"/></svg></span>
            <span class="icon-btn"><svg class="ic-24"><use href="#i-report"/></svg></span>
            <span class="icon-btn"><svg class="ic-24"><use href="#i-trash"/></svg></span>
          </div>
          <span class="tool-sep"></span>
          <div class="tool-group">
            <span class="icon-btn"><svg class="ic-24"><use href="#i-unread"/></svg></span>
            <span class="icon-btn"><svg class="ic-24"><use href="#i-move"/></svg></span>
            <span class="icon-btn tool-more"><svg class="ic-24"><use href="#i-more"/></svg></span>
          </div>
          <div class="pager">
            <span class="pager-text">1 of 458</span>
            <span class="icon-btn pager-off"><svg class="ic-24"><use href="#i-prev"/></svg></span>
            <span class="icon-btn"><svg class="ic-24"><use href="#i-next"/></svg></span>
          </div>
        </div>

        <div class="subject-row">
          <svg class="emoji-alarm"><use href="#e-alarm"/></svg>
          <h1 class="subject">Reminder: <svg class="emoji-pin"><use href="#e-pin"/></svg> Assignment Reminder - Mayank Gupta at 02:10 PM</h1>
          <span class="tag">Inbox <i>×</i></span>
          <div class="subject-acts">
            <span class="icon-btn"><svg class="ic-24"><use href="#i-print"/></svg></span>
            <span class="icon-btn"><svg class="ic-24"><use href="#i-open"/></svg></span>
          </div>
        </div>

        <div class="message">
          <span class="avatar avatar-msg">M</span>
          <div class="msg-main">
            <div class="msg-top">
              <span class="sender">m.guptaa555@gmail.com</span>
              <span class="msg-time">2:09 PM (0 minutes ago)</span>
              <div class="msg-acts">
                <span class="icon-btn"><svg class="ic-24"><use href="#i-star"/></svg></span>
                <span class="icon-btn"><svg class="ic-24"><use href="#i-smile"/></svg></span>
                <span class="icon-btn"><svg class="ic-24"><use href="#i-reply"/></svg></span>
                <span class="icon-btn"><svg class="ic-24"><use href="#i-more"/></svg></span>
              </div>
            </div>
            <div class="recipients">to me, sales <span class="caret"></span></div>
            <div class="msg-body">
              <div><svg class="emoji"><use href="#e-memo"/></svg> Event: <svg class="emoji"><use href="#e-pin"/></svg> Assignment Reminder - Mayank Gupta</div>
              <div><svg class="emoji"><use href="#e-cal"/></svg> Starts at: 2025-06-29 14:10</div>
              <div><svg class="emoji"><use href="#e-pin"/></svg> Description: Daily task check for assignment submission &amp; progress tracking.</div>
            </div>
            <div class="msg-btns">
              <span class="pill pill-reply"><svg class="ic-24"><use href="#i-reply"/></svg>Reply</span>
              <span class="pill pill-forward"><svg class="ic-24"><use href="#i-forward"/></svg>Forward</span>
              <span class="pill pill-smile"><svg class="ic-28"><use href="#i-smile"/></svg></span>
            </div>
          </div>
        </div>
      </main>

      <aside class="rail">
        <span class="rail-item"><svg class="ic-23"><use href="#l-cal"/></svg></span>
        <span class="rail-item"><svg class="ic-24"><use href="#l-keep"/></svg></span>
        <span class="rail-item"><svg class="ic-24"><use href="#l-tasks"/></svg></span>
        <span class="rail-item"><svg class="ic-24"><use href="#l-contacts"/></svg></span>
        <span class="rail-sep"></span>
        <span class="rail-add"><svg class="ic-28"><use href="#i-add"/></svg></span>
      </aside>
    </div>
  </div>
</body>

</html>
```

FILE: styles.css
```css
html,
body {
  margin: 0;
  height: 771px;
  overflow: hidden;
}

body {
  display: flex;
  flex-direction: column;
  font-family: Roboto, "Liberation Sans", sans-serif;
  background: #f8faff;
}

.sprites {
  display: none;
}

svg {
  fill: currentColor;
  flex: none;
}

.ic-18 { width: 18px; height: 18px; }
.ic-20 { width: 20px; height: 20px; }
.ic-23 { width: 23px; height: 23px; }
.ic-24 { width: 24px; height: 24px; }
.ic-28 { width: 28px; height: 28px; }
.ic-30 { width: 30px; height: 30px; }

/* browser frame */
.chrome {
  flex: none;
  height: 151px;
  background: #162314;
  box-sizing: border-box;
  border-bottom: 1px solid #3f4a3d;
}

.tabstrip {
  display: flex;
  align-items: center;
  height: 50px;
  box-sizing: border-box;
  border-top: 1px solid #b9bcb8;
  padding-left: 7px;
  color: #dfe6db;
}

.tab-search {
  display: flex;
  align-items: center;
  justify-content: center;
  width: 35px;
  height: 34px;
  border-radius: 10px;
  background: #2f3b2d;
}

.pinned {
  display: flex;
  margin-left: 7px;
  width: 43px;
}

.pinned .fav {
  width: 20px;
  margin-right: 1px;
}

.tab-active {
  position: relative;
  display: flex;
  align-items: center;
  justify-content: center;
  align-self: flex-end;
  width: 39px;
  height: 43px;
  border-radius: 12px 12px 0 0;
  background: #303c2e;
}

/* small flares left and right of the active tab */
.tab-active::before,
.tab-active::after {
  content: "";
  position: absolute;
  bottom: 0;
  width: 10px;
  height: 10px;
}

.tab-active::before {
  left: -10px;
  background: radial-gradient(circle at 0 0, #162314 10px, #303c2e 10.5px);
}

.tab-active::after {
  right: -10px;
  background: radial-gradient(circle at 100% 0, #162314 10px, #303c2e 10.5px);
}

.favs {
  display: flex;
  align-items: center;
}

.favs-wide {
  margin-left: 5px;
}

.fav {
  display: flex;
  align-items: center;
  width: 20px;
  height: 24px;
  overflow: hidden;
}

.fav svg {
  width: 19px;
  height: 20px;
  box-shadow: 1px 0 0 #2b382a;
}

.favs-wide .fav {
  width: 21.3px;
}

.favs-wide .fav svg {
  width: 20px;
}

.favs-wide .fav-cut {
  width: 16px;
}

.new-tab {
  display: flex;
  justify-content: center;
  width: 30px;
  margin-left: 9px;
  color: #c9d3c4;
}

.win-btns {
  display: flex;
  margin-left: auto;
}

.win-btn {
  display: flex;
  align-items: center;
  justify-content: center;
  width: 57.300px;
  height: 40px;
}

.toolbar {
  display: flex;
  align-items: center;
  height: 50px;
  box-sizing: border-box;
  padding: 8px 10px 0 8px;
  border-radius: 10px 10px 0 0;
  background: #303c2e;
  color: #c3cfbd;
}

.tb-btn {
  display: flex;
  align-items: center;
  justify-content: center;
  width: 36px;
  margin-right: 9px;
}

.tb-off {
  color: #6d7a69;
}

.tb-cam {
  width: 28px;
  margin: 0 0 0 19px;
}

.tb-ext {
  width: 28px;
  margin: 0 0 0 17px;
}

.tb-dots {
  width: 28px;
  margin: 0 0 0 18px;
}

.omnibox {
  display: flex;
  align-items: center;
  width: 1555px;
  height: 42px;
  margin-left: 6px;
  padding: 0 18px 0 6px;
  box-sizing: border-box;
  border-radius: 21px;
  background: #1a2618;
}

.chip {
  display: flex;
  align-items: center;
  justify-content: center;
  width: 31px;
  height: 30px;
  border-radius: 15px;
  background: #303c2e;
}

.url {
  margin-left: 10px;
  font-family: "Open Sans", sans-serif;
  font-size: 17px;
  letter-spacing: -0.1px;
  color: #bcc6b6;
}

.url b {
  font-weight: 400;
  color: #eef2ea;
}

.omni-star {
  margin-left: auto;
  color: #dfe6db;
}

.tb-sep {
  width: 1px;
  height: 20px;
  margin-left: 19px;
  background: #4c584a;
}

.tb-avatar {
  display: flex;
  align-items: center;
  justify-content: center;
  width: 25px;
  height: 25px;
  margin-left: 22px;
  border-radius: 50%;
  background: #5c6bc0;
  color: #e8eaf6;
  font-size: 14px;
}

.bookmarks {
  display: flex;
  align-items: center;
  height: 50px;
  padding: 0 15px 0 15px;
  background: #303c2e;
  color: #c3cfbd;
}

.bm-sep {
  width: 1px;
  height: 20px;
  margin-left: auto;
  background: #4c584a;
}

.bm-folder {
  margin-left: 20px;
}

.bm-text {
  margin-left: 9px;
  font-family: "Open Sans", sans-serif;
  font-size: 14.500px;
  letter-spacing: -0.1px;
}

/* gmail */
.gmail {
  flex: 1;
  display: flex;
  flex-direction: column;
  min-height: 0;
  color: #444746;
}

.gm-head {
  flex: none;
  display: flex;
  align-items: center;
  height: 80px;
}

.brand {
  display: flex;
  align-items: center;
  width: 319px;
  padding-left: 29px;
  box-sizing: border-box;
}

.logo {
  width: 37px;
  height: 28px;
  margin-left: 21px;
}

.logo-text {
  margin-left: 15px;
  font-size: 27.500px;
  color: #4b4e4f;
}

.search {
  display: flex;
  align-items: center;
  width: 900px;
  height: 60px;
  padding: 0 15px;
  box-sizing: border-box;
  border-radius: 30px;
  background: #e9eef6;
}

.search-text {
  margin-left: 12px;
  font-size: 20px;
  color: #5f6368;
}

.search-tune {
  margin-left: auto;
  margin-right: 6px;
}

.head-right {
  display: flex;
  align-items: center;
  gap: 13px;
  margin-left: auto;
  padding-right: 19px;
}

.head-help {
  margin-right: 2px;
}

.head-gear {
  margin-right: -1px;
}

.icon-btn {
  flex: none;
  display: flex;
  align-items: center;
  justify-content: center;
  width: 40px;
  height: 40px;
}

.avatar {
  flex: none;
  display: flex;
  align-items: center;
  justify-content: center;
  width: 40px;
  height: 40px;
  border-radius: 50%;
  background: #bf360c;
  color: #fff;
  font-size: 25px;
}

.avatar-head {
  margin-left: 7px;
}

.gm-body {
  flex: 1;
  display: flex;
  min-height: 0;
}

.sidebar {
  flex: none;
  width: 319px;
}

.compose {
  display: flex;
  align-items: center;
  gap: 21px;
  width: 178px;
  height: 70px;
  margin: 10px 0 20px 9px;
  padding-left: 21px;
  box-sizing: border-box;
  border-radius: 20px;
  background: #c2e7ff;
  color: #001d35;
  font-size: 17.500px;
}

.compose svg {
  color: #1a1a1a;
}

.nav-row {
  display: flex;
  align-items: center;
  gap: 23px;
  height: 40px;
  margin-right: 20px;
  padding: 0 16px 0 32px;
  border-radius: 0 20px 20px 0;
  color: #202124;
  font-size: 17.500px;
}

.nav-row svg {
  color: #5f6368;
}

.nav-row em {
  margin-left: auto;
  font-style: normal;
  font-size: 15px;
  color: #5f6368;
}

.nav-active {
  background: #d3e3fd;
  color: #041e49;
  font-weight: 700;
}

.nav-active svg {
  color: #041e49;
}

.nav-active em {
  color: #041e49;
  font-weight: 700;
}

.nav-bold {
  font-weight: 700;
}

.nav-bold em {
  font-weight: 400;
}

.labels {
  display: flex;
  align-items: center;
  justify-content: space-between;
  height: 40px;
  margin: 27px 30px 0 32px;
  font-size: 20px;
  color: #202124;
}

.labels svg {
  color: #5f6368;
}

.card {
  flex: 1;
  min-width: 0;
  border-radius: 20px 20px 0 0;
  background: #fff;
}

.mail-tools {
  display: flex;
  align-items: center;
  height: 61px;
  padding: 0 33px 0 12px;
}

.tool-group {
  display: flex;
  gap: 15px;
}

.mail-tools > .tool-group:nth-child(2) {
  margin-left: 30px;
}

.tool-more {
  margin-left: -6px;
}

.tool-sep {
  width: 1px;
  height: 24px;
  margin: 0 19px 0 16px;
  background: #e0e0e0;
}

.pager {
  display: flex;
  align-items: center;
  gap: 9px;
  margin-left: auto;
}

.pager-text {
  margin-right: 9px;
  font-size: 15px;
  color: #5f6368;
}

.pager-off {
  color: #b3b6b9;
}

.subject-row {
  display: flex;
  align-items: center;
  height: 83px;
  padding: 0 32px 0 91px;
}

.emoji-alarm {
  width: 32px;
  height: 32px;
}

.emoji-pin {
  width: 34px;
  height: 34px;
  vertical-align: -7px;
}

.subject {
  margin: 0 0 0 7px;
  font-size: 27.700px;
  font-weight: 400;
  white-space: nowrap;
  color: #1f1f1f;
}

.tag {
  display: flex;
  align-items: center;
  gap: 7px;
  height: 22px;
  margin-left: 12px;
  padding: 0 7px 0 6px;
  border-radius: 5px;
  background: #e3e3e3;
  font-size: 14.500px;
  color: #444746;
}

.tag i {
  font-style: normal;
  font-size: 16px;
}

.subject-acts {
  display: flex;
  gap: 5px;
  margin-left: auto;
}

.message {
  display: flex;
  gap: 20px;
  padding: 2px 33px 0 20px;
}

.avatar-msg {
  width: 50px;
  height: 50px;
  font-size: 30px;
}

.msg-main {
  flex: 1;
  min-width: 0;
}

.msg-top {
  display: flex;
  align-items: center;
  height: 24px;
}

.sender {
  font-size: 17.500px;
  font-weight: 700;
  letter-spacing: 0.45px;
  color: #1f1f1f;
}

.msg-time {
  margin-left: auto;
  font-size: 15px;
  color: #5e5e5e;
}

.msg-acts {
  display: flex;
  gap: 10px;
  margin-left: 17px;
}

.recipients {
  display: flex;
  align-items: center;
  height: 26px;
  font-size: 15px;
  color: #5e5e5e;
}

.caret {
  width: 0;
  height: 0;
  margin: 2px 0 0 6px;
  border: 5px solid transparent;
  border-top-color: #5e5e5e;
  border-bottom: 0;
}

.msg-body {
  margin-top: 10px;
  font-family: "Liberation Sans", Arial, sans-serif;
  font-size: 16.200px;
  line-height: 24.500px;
  color: #222;
}

.emoji {
  width: 20px;
  height: 20px;
  vertical-align: -4px;
}

.msg-btns {
  display: flex;
  gap: 10px;
  margin-top: 71px;
}

.pill {
  display: flex;
  align-items: center;
  height: 45px;
  box-sizing: border-box;
  border: 1px solid #747775;
  border-radius: 23px;
  font-size: 18.200px;
  color: #444746;
}

.pill-reply {
  width: 130px;
  padding-left: 22px;
  gap: 11px;
}

.pill-forward {
  width: 138px;
  padding-left: 16px;
  gap: 10px;
}

.pill-smile {
  justify-content: center;
  width: 45px;
}

.rail {
  flex: none;
  display: flex;
  flex-direction: column;
  align-items: center;
  width: 67px;
  padding-top: 1px;
}

.rail-item {
  display: flex;
  align-items: center;
  justify-content: center;
  height: 70px;
}

.rail-sep {
  width: 25px;
  height: 1px;
  margin-top: 19px;
  background: #dadce0;
}

.rail-add {
  margin-top: 41px;
  color: #1f1f1f;
}

/* text inside tab favicons */
.ft-zm { font: 700 9px Roboto, sans-serif; fill: #fff; }
.ft-in { font: 700 16px "Liberation Sans", sans-serif; fill: #fff; }
.ft-7 { font: 700 13px "Liberation Sans", sans-serif; fill: #fff; }
.ft-w { font: 700 13px "Liberation Sans", sans-serif; fill: #1565a0; }
.ft-q { font: 700 5px "Liberation Sans", sans-serif; fill: #a05050; }
.ft-k { font: 700 17px "Liberation Sans", sans-serif; fill: #111; }
.ft-sp { font: 700 10px "Liberation Sans", sans-serif; fill: #d88a4a; }
.ft-a { font: 700 15px "Liberation Sans", sans-serif; fill: #111; }
.ft-b { font: italic 700 16px "Liberation Sans", sans-serif; fill: #fff; }
.cal-num { font: 700 9px Roboto, sans-serif; fill: #4285f4; }
.cal-17 { font: 700 8.500px "Liberation Sans", sans-serif; fill: #37474f; }
```
